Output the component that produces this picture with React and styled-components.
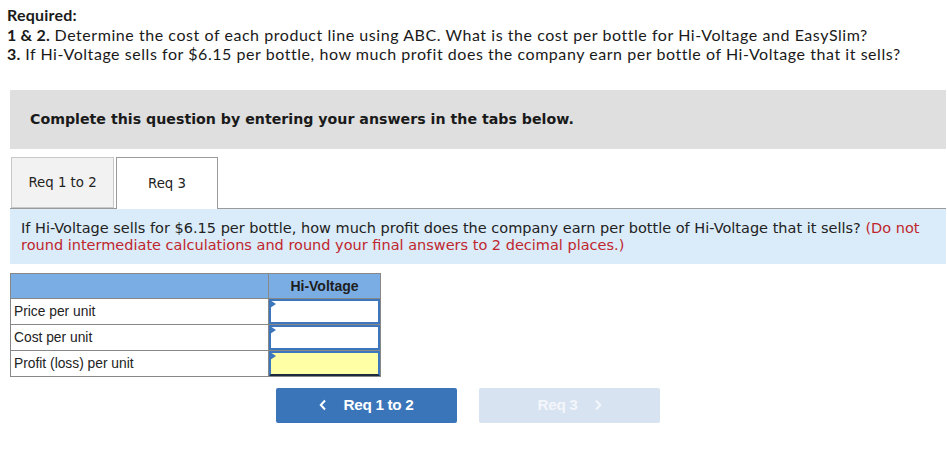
import React from 'react';
import styled, { createGlobalStyle } from 'styled-components';

const GlobalStyle = createGlobalStyle`
  body {
    margin: 0;
    background: #ffffff;
    font-family: "Liberation Sans", Arial, sans-serif;
  }
`;

const Page = styled.div`
  width: 947px;
  padding: 5px 0 0 0;
`;

const Required = styled.div`
  padding-left: 7px;
  font-family: Lato, "Liberation Sans", sans-serif;
  font-size: 16px;
  letter-spacing: 0.55px;
  line-height: 19.5px;
  color: #1a1a1a;
  b {
    font-weight: bold;
    letter-spacing: 0.2px;
  }
`;

const Instruction = styled.div`
  margin: 26px 1px 0 10px;
  height: 59px;
  background: #dfdfdf;
  display: flex;
  align-items: center;
  padding-left: 20px;
  font-family: "DejaVu Sans", Verdana, sans-serif;
  font-weight: bold;
  font-size: 14.2px;
  color: #1a1a1a;
`;

const TabBar = styled.div`
  margin: 8px 1px 0 10px;
  display: flex;
  align-items: flex-end;
  gap: 2px;
  border-bottom: 1px solid #9a9a9a;
`;

const Tab = styled.div`
  width: ${p => (p.active ? '102px' : '103px')};
  height: ${p => (p.active ? '52px' : '51px')};
  margin-left: ${p => (p.first ? '1px' : '0')};
  margin-bottom: ${p => (p.active ? '-1px' : '0')};
  box-sizing: border-box;
  display: flex;
  align-items: center;
  justify-content: center;
  font-family: "DejaVu Sans", Verdana, sans-serif;
  font-size: 13.3px;
  color: #222;
  background: ${p => (p.active ? '#ffffff' : '#f2f2f2')};
  border: 1px solid ${p => (p.active ? '#9a9a9a' : '#c8c8c8')};
  border-bottom: ${p => (p.active ? 'none' : '1px solid #c8c8c8')};
`;

const Question = styled.div`
  margin: 0 1px 0 10px;
  background: #daebf9;
  padding: 11px 10px 10px 11px;
  font-family: "DejaVu Sans", Verdana, sans-serif;
  font-size: 14.5px;
  line-height: 17px;
  color: #222;
`;

const Note = styled.span`
  color: #c0262d;
`;

const Table = styled.table`
  margin: 9px 0 0 10px;
  border-collapse: collapse;
  font-family: "Liberation Sans", Arial, sans-serif;
  font-size: 13.8px;
  color: #222;
`;

const HeadCell = styled.th`
  background: #7aade3;
  border: 1px solid #888;
  height: 24px;
  padding: 0;
  width: ${p => p.w}px;
  font-weight: bold;
  font-size: 14px;
  color: #1e1e1e;
  text-align: center;
`;

const LabelCell = styled.td`
  border: 1px solid #888;
  height: 25px;
  padding: 0 0 0 3px;
  text-align: left;
`;

const InputCell = styled.td`
  border: 1px solid #888;
  padding: 0;
  height: 25px;
`;

const Entry = styled.div`
  position: relative;
  height: 25px;
  box-sizing: border-box;
  border: 2px solid #3c77bd;
  border-bottom-color: ${p => (p.last ? '#1b2a3d' : '#3c77bd')};
  background: ${p => (p.yellow ? '#ffffa6' : '#ffffff')};
  &::before {
    content: '';
    position: absolute;
    left: -1px;
    top: -1px;
    border-left: 6px solid #3c77bd;
    border-top: 4px solid transparent;
    border-bottom: 4px solid transparent;
  }
`;

const Nav = styled.div`
  margin: 11px 0 0 276px;
  display: flex;
  gap: 22px;
`;

const NavButton = styled.div`
  width: 181px;
  height: 35px;
  border-radius: 2px;
  background: ${p => (p.disabled ? '#d8e3f1' : '#3a75b9')};
  color: ${p => (p.disabled ? '#f3f6fa' : '#ffffff')};
  display: flex;
  align-items: center;
  justify-content: center;
  gap: 16px;
  font-family: "Liberation Sans", Arial, sans-serif;
  font-weight: bold;
  font-size: 15.3px;
  letter-spacing: -0.3px;
`;

const Chevron = ({ dir }) => (
  <svg width="8" height="12" viewBox="0 0 8 12">
    <path
      d={dir === 'left' ? 'M6 1.5 L1.8 6 L6 10.5' : 'M2 1.5 L6.2 6 L2 10.5'}
      fill="none"
      stroke="currentColor"
      strokeWidth="2"
    />
  </svg>
);

const rows = [
  { label: 'Price per unit' },
  { label: 'Cost per unit' },
  { label: 'Profit (loss) per unit', yellow: true }
];

const App = () => (
  <>
    <GlobalStyle />
    <Page>
      <Required>
        <b>Required:</b>
        <br />
        <b>1 &amp; 2.</b> Determine the cost of each product line using ABC. What is the cost per bottle for Hi-Voltage and EasySlim?
        <br />
        <b>3.</b> If Hi-Voltage sells for $6.15 per bottle, how much profit does the company earn per bottle of Hi-Voltage that it sells?
      </Required>

      <Instruction>Complete this question by entering your answers in the tabs below.</Instruction>

      <TabBar>
        <Tab first>Req 1 to 2</Tab>
        <Tab active>Req 3</Tab>
      </TabBar>

      <Question>
        If Hi-Voltage sells for $6.15 per bottle, how much profit does the company earn per bottle of Hi-Voltage that it sells?{' '}
        <Note>(Do not</Note>
        <br />
        <Note>round intermediate calculations and round your final answers to 2 decimal places.)</Note>
      </Question>

      <Table>
        <thead>
          <tr>
            <HeadCell w={257}></HeadCell>
            <HeadCell w={111}>Hi-Voltage</HeadCell>
          </tr>
        </thead>
        <tbody>
          {rows.map((row, i) => (
            <tr key={row.label}>
              <LabelCell>{row.label}</LabelCell>
              <InputCell>
                <Entry yellow={row.yellow} last={i === rows.length - 1} />
              </InputCell>
            </tr>
          ))}
        </tbody>
      </Table>

      <Nav>
        <NavButton>
          <Chevron dir="left" />
          <span>Req 1 to 2</span>
        </NavButton>
        <NavButton disabled>
          <span>Req 3</span>
          <Chevron dir="right" />
        </NavButton>
      </Nav>
    </Page>
  </>
);

export default App;
